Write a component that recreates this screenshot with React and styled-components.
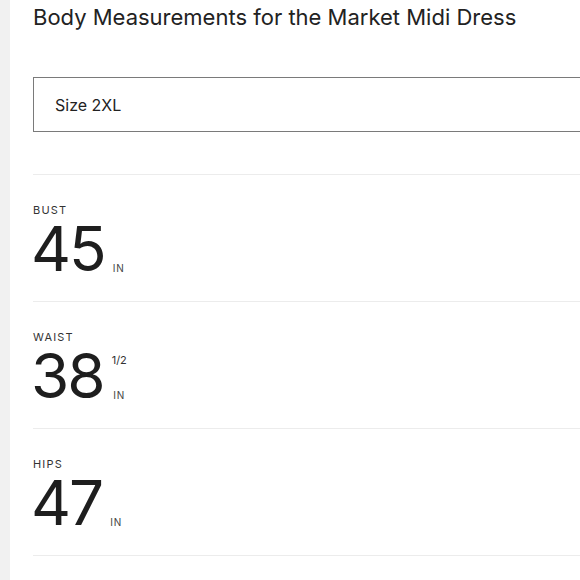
import React from 'react';
import styled, { createGlobalStyle } from 'styled-components';

const GlobalStyle = createGlobalStyle`
  html, body {
    margin: 0;
    padding: 0;
    background: #ffffff;
    font-family: Inter, "Liberation Sans", sans-serif;
    color: #222;
    overflow: hidden;
  }
`;

const Page = styled.div`
  display: flex;
  width: 580px;
  height: 580px;
  overflow: hidden;
`;

const Rail = styled.div`
  flex: 0 0 10px;
  background: #f1f1f1;
`;

const Main = styled.main`
  flex: 0 0 620px;
  padding: 3px 0 0 23px;
  box-sizing: border-box;
`;

const Title = styled.h1`
  margin: 0;
  font-size: 22px;
  font-weight: 400;
  line-height: 29px;
  color: #222;
`;

const SizeSelect = styled.div`
  margin-top: 45px;
  height: 55px;
  box-sizing: border-box;
  border: 1.5px solid #7a7a7a;
  display: flex;
  align-items: center;
  padding-left: 21px;
  font-size: 16px;
  color: #222;
`;

const Divider = styled.hr`
  margin: 42px 0 0;
  border: 0;
  border-top: 1px solid #ececec;
`;

const Row = styled.section`
  height: 127px;
  box-sizing: border-box;
  padding-top: 29px;
  border-bottom: 1px solid #ececec;
`;

const Label = styled.div`
  font-size: 11px;
  letter-spacing: 1.2px;
  line-height: 13px;
  color: #333;
  text-transform: uppercase;
`;

const ValueLine = styled.div`
  display: flex;
  align-items: stretch;
  margin-top: 8px;
`;

const Number = styled.span`
  font-size: 62px;
  line-height: 48px;
  font-weight: 400;
  letter-spacing: -2px;
  margin-left: -2px;
  color: #1e1e1e;
`;

const UnitStack = styled.div`
  display: flex;
  flex-direction: column;
  align-items: center;
  margin-left: 8px;
`;

const Fraction = styled.span`
  font-size: 11px;
  line-height: 12px;
  color: #333;
  margin-top: 2px;
`;

const Unit = styled.span`
  font-size: 10px;
  letter-spacing: 0.8px;
  line-height: 10px;
  color: #444;
  margin-top: auto;
`;

const measurements = [
  { label: 'Bust', value: '45' },
  { label: 'Waist', value: '38', fraction: '1/2' },
  { label: 'Hips', value: '47' },
];

export default function App() {
  return (
    <Page>
      <GlobalStyle />
      <Rail />
      <Main>
        <Title>Body Measurements for the Market Midi Dress</Title>
        <SizeSelect>Size 2XL</SizeSelect>
        <Divider />
        {measurements.map((m) => (
          <Row key={m.label}>
            <Label>{m.label}</Label>
            <ValueLine>
              <Number>{m.value}</Number>
              <UnitStack>
                {m.fraction && <Fraction>{m.fraction}</Fraction>}
                <Unit>IN</Unit>
              </UnitStack>
            </ValueLine>
          </Row>
        ))}
      </Main>
    </Page>
  );
}
